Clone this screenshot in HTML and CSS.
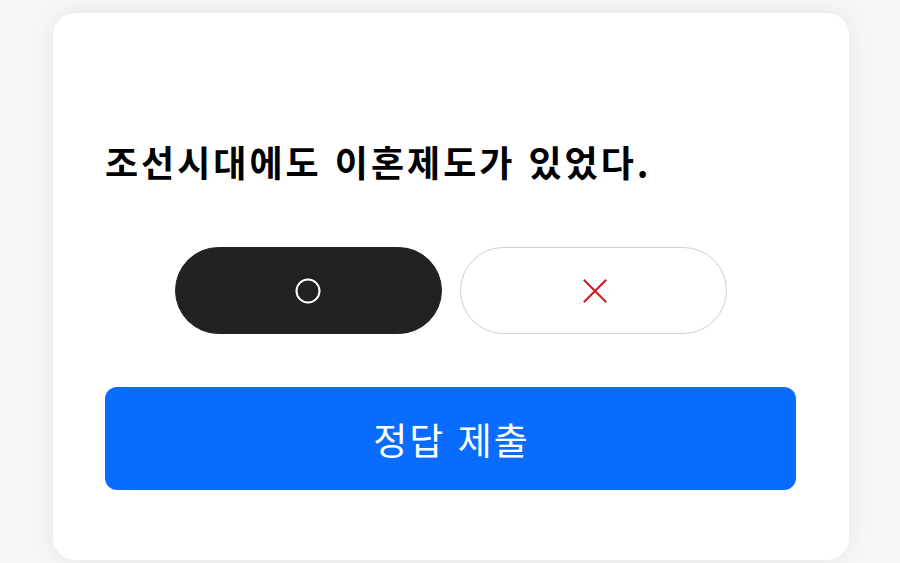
FILE: index.html
```html
<!DOCTYPE html>
<html lang="ko">
<head>
<meta charset="utf-8">
<link rel="stylesheet" href="styles.css">
</head>
<body>
<div class="page">
  <div class="card">
    <h1 class="question">조선시대에도 이혼제도가 있었다.</h1>
    <div class="choices">
      <button class="choice choice-selected" type="button" aria-label="O">
        <svg width="28" height="28" viewBox="0 0 28 28"><circle cx="14" cy="14" r="11.5" fill="none" stroke="#ffffff" stroke-width="2"/></svg>
      </button>
      <button class="choice" type="button" aria-label="X">
        <svg class="x-icon" width="28" height="28" viewBox="0 0 28 28"><path d="M3.5 3.5 L24.5 24.5 M24.5 3.5 L3.5 24.5" stroke="#d0181b" stroke-width="2" stroke-linecap="square"/></svg>
      </button>
    </div>
    <button class="submit" type="button">정답 제출</button>
  </div>
</div>
</body>
</html>
```
FILE: styles.css
```css
html, body {
  margin: 0;
  padding: 0;
}
body {
  background: #f6f6f6;
  font-family: "Noto Sans CJK KR", "Noto Sans", sans-serif;
  width: 900px;
  height: 563px;
  overflow: hidden;
}
.page {
  padding: 13px 51px 0 53px;
}
.card {
  box-sizing: border-box;
  width: 796px;
  height: 547px;
  background: #ffffff;
  border-radius: 22px;
  box-shadow: 0 0 22px rgba(0, 0, 0, 0.07);
  padding: 127px 53px 0 52px;
  display: flex;
  flex-direction: column;
}
.question {
  margin: 0;
  font-size: 36px;
  line-height: 42px;
  font-weight: 700;
  color: #000000;
  letter-spacing: 3px;
}
.choices {
  margin-top: 65px;
  display: flex;
  justify-content: center;
  gap: 18px;
}
.choice {
  box-sizing: border-box;
  width: 267px;
  height: 87px;
  border-radius: 44px;
  border: 1.5px solid #cfcfcf;
  background: #ffffff;
  display: flex;
  align-items: center;
  justify-content: center;
  padding: 0;
  cursor: pointer;
}
.choice-selected {
  background: #222222;
  border-color: #222222;
}
.x-icon {
  margin-left: 4px;
}
.submit {
  margin-top: 53px;
  width: 691px;
  height: 103px;
  border: none;
  border-radius: 12px;
  background: #086cff;
  color: #ffffff;
  font-family: "Noto Sans CJK KR", "Noto Sans", sans-serif;
  font-size: 37px;
  font-weight: 400;
  letter-spacing: 2px;
  text-indent: 2px;
  cursor: pointer;
  padding: 0;
}
```
